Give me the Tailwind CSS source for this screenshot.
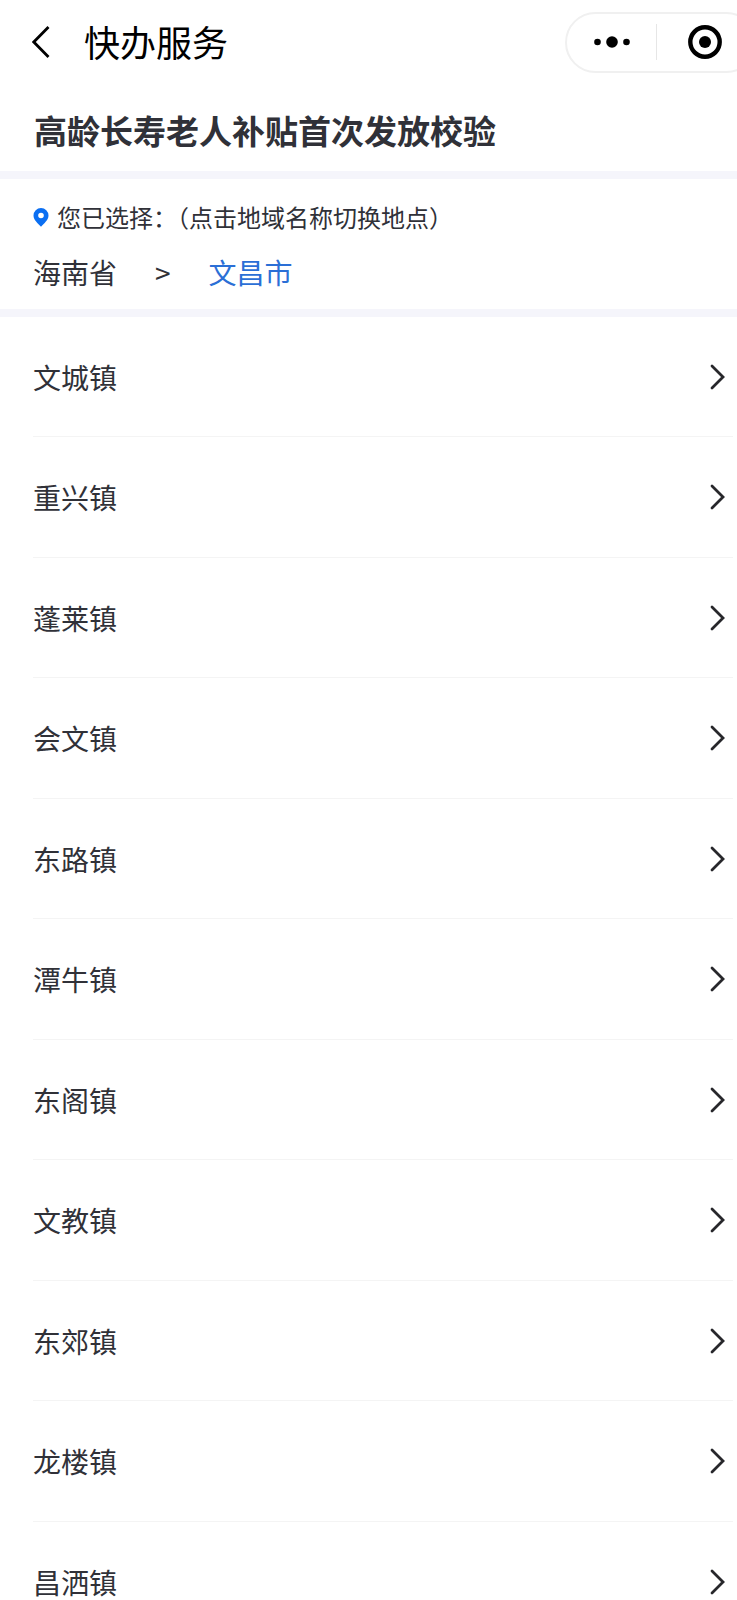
<!DOCTYPE html>
<html lang="zh-CN">
<head>
<meta charset="utf-8">
<meta name="viewport" content="width=device-width, initial-scale=1">
<title>快办服务</title>
<script src="https://cdn.jsdelivr.net/npm/@tailwindcss/browser@4"></script>
</head>
<body class="bg-white font-['Noto_Sans_CJK_SC',sans-serif] text-[#303138] overflow-x-hidden">
<svg class="hidden"><symbol id="chevron" viewBox="0 0 16 28"><path d="M2 3 L13 14 L2 25" fill="none" stroke="#27272b" stroke-width="2.800" stroke-linecap="round" stroke-linejoin="miter"/></symbol></svg>
<header class="flex h-[84px] items-center pl-8 text-black">
  <button type="button" aria-label="返回" class="flex w-[52px] items-center">
    <svg class="h-8 w-[18px]" viewBox="0 0 18 32" fill="none" stroke="#000" stroke-width="2.800"><path d="M16.500 1 L1.800 16 L16.500 31"/></svg>
  </button>
  <span class="pb-0.5 text-4xl leading-[52px]">快办服务</span>
  <div class="-mr-5 ml-auto flex h-[61px] w-48 shrink-0 items-center rounded-full border-2 border-[#f0f0f0]">
    <button type="button" aria-label="更多" class="flex h-full w-[89px] items-center justify-center">
      <svg class="h-3 w-9" viewBox="0 0 36 12"><circle cx="3.500" cy="6" r="3.300"/><circle cx="18" cy="6" r="5.800"/><circle cx="32.500" cy="6" r="3.300"/></svg>
    </button>
    <span class="h-9 w-px bg-[#e6e6e6]"></span>
    <button type="button" aria-label="关闭" class="flex h-full flex-1 items-center justify-center pr-0.5">
      <svg class="h-[34px] w-[34px]" viewBox="0 0 34 34"><circle cx="17" cy="17" r="14.700" fill="none" stroke="#000" stroke-width="4.400"/><circle cx="17" cy="17" r="6"/></svg>
    </button>
  </div>
</header>
<main>
  <h1 class="flex h-[95px] items-center border-b-8 border-[#f5f5fb] pt-1 pl-[34px] text-[33px] leading-[48px] font-bold">高龄长寿老人补贴首次发放校验</h1>
  <section class="border-b-8 border-[#f5f5fb] pt-5 pb-[17px] pl-[33px]">
    <p class="flex items-center text-2xl leading-9">
      <svg class="mr-2 h-[19px] w-4 shrink-0" viewBox="0 0 16 19"><path fill="#0b6ff2" fill-rule="evenodd" d="M8 0a7.500 7.500 0 0 0-7.500 7.500C.5 12.200 5 15.200 8 18.800c3-3.600 7.500-6.600 7.500-11.300A7.500 7.500 0 0 0 8 0Zm0 4.700a2.800 2.800 0 1 1 0 5.600 2.800 2.800 0 0 1 0-5.600Z"/></svg>
      <span>您已选择：（点击地域名称切换地点）</span>
    </p>
    <nav aria-label="地域" class="mt-[17px] flex items-center text-[28px] leading-10">
      <a href="#">海南省</a>
      <span class="mx-[38px]">&gt;</span>
      <a href="#" class="text-[#2b6fd6]">文昌市</a>
    </nav>
  </section>
  <ul class="pr-1 pl-[33px] text-[28px] leading-10">
    <li class="h-[120px] border-b border-[#f4f4f4] even:h-[121px]"><a href="#" class="flex h-full items-center justify-between pr-[7px]">文城镇<svg class="h-7 w-4"><use href="#chevron"/></svg></a></li>
    <li class="h-[120px] border-b border-[#f4f4f4] even:h-[121px]"><a href="#" class="flex h-full items-center justify-between pr-[7px]">重兴镇<svg class="h-7 w-4"><use href="#chevron"/></svg></a></li>
    <li class="h-[120px] border-b border-[#f4f4f4] even:h-[121px]"><a href="#" class="flex h-full items-center justify-between pr-[7px]">蓬莱镇<svg class="h-7 w-4"><use href="#chevron"/></svg></a></li>
    <li class="h-[120px] border-b border-[#f4f4f4] even:h-[121px]"><a href="#" class="flex h-full items-center justify-between pr-[7px]">会文镇<svg class="h-7 w-4"><use href="#chevron"/></svg></a></li>
    <li class="h-[120px] border-b border-[#f4f4f4] even:h-[121px]"><a href="#" class="flex h-full items-center justify-between pr-[7px]">东路镇<svg class="h-7 w-4"><use href="#chevron"/></svg></a></li>
    <li class="h-[120px] border-b border-[#f4f4f4] even:h-[121px]"><a href="#" class="flex h-full items-center justify-between pr-[7px]">潭牛镇<svg class="h-7 w-4"><use href="#chevron"/></svg></a></li>
    <li class="h-[120px] border-b border-[#f4f4f4] even:h-[121px]"><a href="#" class="flex h-full items-center justify-between pr-[7px]">东阁镇<svg class="h-7 w-4"><use href="#chevron"/></svg></a></li>
    <li class="h-[120px] border-b border-[#f4f4f4] even:h-[121px]"><a href="#" class="flex h-full items-center justify-between pr-[7px]">文教镇<svg class="h-7 w-4"><use href="#chevron"/></svg></a></li>
    <li class="h-[120px] border-b border-[#f4f4f4] even:h-[121px]"><a href="#" class="flex h-full items-center justify-between pr-[7px]">东郊镇<svg class="h-7 w-4"><use href="#chevron"/></svg></a></li>
    <li class="h-[120px] border-b border-[#f4f4f4] even:h-[121px]"><a href="#" class="flex h-full items-center justify-between pr-[7px]">龙楼镇<svg class="h-7 w-4"><use href="#chevron"/></svg></a></li>
    <li class="h-[120px] border-b border-[#f4f4f4] even:h-[121px]"><a href="#" class="flex h-full items-center justify-between pr-[7px]">昌洒镇<svg class="h-7 w-4"><use href="#chevron"/></svg></a></li>
  </ul>
</main>
</body>
</html>
